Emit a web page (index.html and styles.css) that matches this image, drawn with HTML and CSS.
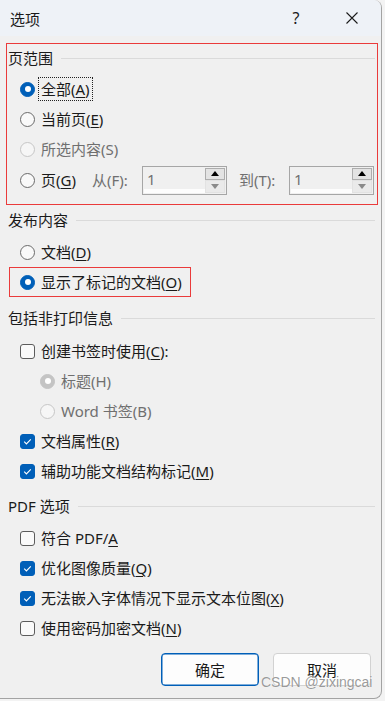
FILE: index.html
```html
<!DOCTYPE html>
<html lang="zh-CN">
<head>
  <meta charset="UTF-8">
  <meta name="viewport" content="width=device-width, initial-scale=1.0">
  <title>选项</title>
  <link rel="stylesheet" href="styles.css">
</head>
<body>

  <div class="dialog">
    <!-- Title bar -->
    <div class="titlebar">
      <span class="title">选项</span>
      <span class="help">?</span>
      <span class="close">
        <svg width="12" height="12" viewBox="0 0 12 12"><path d="M0.5 0.5 L11.5 11.5 M11.5 0.5 L0.5 11.5" stroke="#1b1b1b" stroke-width="1.1" fill="none"/></svg>
      </span>
    </div>

    <div class="content">
      <!-- Page range -->
      <section class="group group-range marked-box">
        <div class="legend"><span>页范围</span><i class="rule"></i></div>
        <div class="options">
          <div class="opt"><span class="radio on"></span><span class="focus">全部(<u>A</u>)</span></div>
          <div class="opt"><span class="radio"></span><span>当前页(<u>E</u>)</span></div>
          <div class="opt disabled"><span class="radio"></span><span>所选内容(S)</span></div>
          <div class="opt opt-pages">
            <span class="opt-main"><span class="radio"></span><span>页(<u>G</u>)</span></span>
            <span class="spin-label">从(F):</span>
            <span class="spin">
              <span class="spin-val">1</span>
              <span class="spin-btns"><span class="spin-up"><i class="tri-up"></i></span><span class="spin-down"><i class="tri-down"></i></span></span>
            </span>
            <span class="spin-label to">到(T):</span>
            <span class="spin">
              <span class="spin-val">1</span>
              <span class="spin-btns"><span class="spin-up"><i class="tri-up"></i></span><span class="spin-down"><i class="tri-down"></i></span></span>
            </span>
          </div>
        </div>
      </section>

      <!-- Publish what -->
      <section class="group group-publish">
        <div class="legend"><span>发布内容</span><i class="rule"></i></div>
        <div class="options">
          <div class="opt"><span class="radio"></span><span>文档(<u>D</u>)</span></div>
          <div class="opt opt-marked"><span class="radio on"></span><span>显示了标记的文档(<u>O</u>)</span></div>
        </div>
      </section>

      <!-- Non-printing info -->
      <section class="group group-info">
        <div class="legend"><span>包括非打印信息</span><i class="rule"></i></div>
        <div class="options">
          <div class="opt"><span class="check"></span><span>创建书签时使用(<u>C</u>):</span></div>
          <div class="opt sub disabled"><span class="radio on"></span><span>标题(H)</span></div>
          <div class="opt sub disabled"><span class="radio"></span><span>Word 书签(B)</span></div>
          <div class="opt"><span class="check on"><svg width="15" height="15" viewBox="0 0 15 15"><path d="M4.2 7.7 L6.4 9.9 L10.8 5.3" stroke="#fff" stroke-width="1.1" fill="none"/></svg></span><span>文档属性(<u>R</u>)</span></div>
          <div class="opt"><span class="check on"><svg width="15" height="15" viewBox="0 0 15 15"><path d="M4.2 7.7 L6.4 9.9 L10.8 5.3" stroke="#fff" stroke-width="1.1" fill="none"/></svg></span><span>辅助功能文档结构标记(<u>M</u>)</span></div>
        </div>
      </section>

      <!-- PDF options -->
      <section class="group group-pdf">
        <div class="legend"><span>PDF 选项</span><i class="rule"></i></div>
        <div class="options">
          <div class="opt"><span class="check"></span><span>符合 PDF/<u>A</u></span></div>
          <div class="opt"><span class="check on"><svg width="15" height="15" viewBox="0 0 15 15"><path d="M4.2 7.7 L6.4 9.9 L10.8 5.3" stroke="#fff" stroke-width="1.1" fill="none"/></svg></span><span>优化图像质量(<u>Q</u>)</span></div>
          <div class="opt"><span class="check on"><svg width="15" height="15" viewBox="0 0 15 15"><path d="M4.2 7.7 L6.4 9.9 L10.8 5.3" stroke="#fff" stroke-width="1.1" fill="none"/></svg></span><span>无法嵌入字体情况下显示文本位图(<u>X</u>)</span></div>
          <div class="opt"><span class="check"></span><span>使用密码加密文档(<u>N</u>)</span></div>
        </div>
      </section>

      <div class="buttons">
        <button class="btn btn-default">确定</button>
        <button class="btn">取消</button>
      </div>
    </div>

    <span class="watermark">CSDN @zixingcai</span>
  </div>

</body>
</html>
```

FILE: styles.css
```css
body {
  margin: 0;
  padding: 0;
  background: #f3f3f3;
  font-family: "Noto Sans", "Noto Sans CJK SC", sans-serif;
  color: #1a1a1a;
  overflow: hidden;
}

.dialog {
  position: relative;
  width: 382px;
  height: 699px;
  box-sizing: border-box;
  background: #f0f0f0;
  border-right: 1px solid #a3a3a3;
  border-bottom: 1px solid #a3a3a3;
  border-radius: 0 8px 8px 0;
  overflow: hidden;
}

.titlebar {
  display: flex;
  align-items: center;
  height: 36px;
  background: #eef2f7;
  font-size: 15px;
}

.title {
  margin-left: 10px;
  flex: 1;
}

.help {
  width: 16px;
  margin-right: 42px;
  font-size: 16px;
  text-align: center;
}

.close {
  display: flex;
  margin-right: 23px;
}

.content {
  padding: 7px 0 0 6px;
  font-size: 15px;
}

.group {
  width: 372px;
  box-sizing: border-box;
  border: 1px solid transparent;
  padding-top: 3px;
}

.marked-box {
  border-color: #ea3b3b;
}

.group-range { padding-bottom: 8px; }
.group-publish { padding-bottom: 5px; }
.group-info { padding-bottom: 4px; }
.group-pdf { padding-bottom: 0; }

.legend {
  display: flex;
  align-items: center;
  height: 22px;
  padding-left: 1px;
  line-height: 22px;
}

.rule {
  flex: 1;
  height: 1px;
  margin: 0 2px 0 8px;
  background: #dadada;
}

.options {
  margin-top: 6px;
}

.group-range .options { margin-top: 5px; }
.group-info .options { margin-top: 7px; }

.opt {
  display: flex;
  align-items: center;
  height: 30px;
  padding-left: 13px;
  line-height: 20px;
  white-space: nowrap;
}

.opt.sub {
  padding-left: 33px;
}

.opt.disabled {
  color: #6f6f6f;
}

.opt-marked {
  width: fit-content;
  box-sizing: border-box;
  margin-left: 2px;
  padding: 0 8px 0 10px;
  border: 1px solid #ea3b3b;
}

.radio {
  position: relative;
  width: 15px;
  height: 15px;
  box-sizing: border-box;
  margin-right: 6px;
  border: 1px solid #6a6a6a;
  border-radius: 50%;
  background: #f9f9f9;
  flex: none;
}

.radio.on {
  border-color: #005fb8;
  background: #005fb8;
}

.radio.on::after {
  content: "";
  position: absolute;
  left: 3.5px;
  top: 3.5px;
  width: 6px;
  height: 6px;
  border-radius: 50%;
  background: #fff;
}

.disabled .radio {
  border-color: #c6c6c6;
  background: #f6f6f6;
}

.disabled .radio.on {
  border-color: #c4c4c4;
  background: #c4c4c4;
}

.check {
  display: flex;
  width: 15px;
  height: 15px;
  box-sizing: border-box;
  margin-right: 6px;
  border: 1px solid #5c5c5c;
  border-radius: 3px;
  background: #fafafa;
  flex: none;
}

.check.on {
  border-color: #005fb8;
  background: #005fb8;
}

.check svg {
  margin: -1px;
}

.focus {
  outline: 1px dotted #222;
  outline-offset: 1px;
  padding: 0 1px;
  margin-left: -1px;
}

u {
  text-decoration-thickness: 1px;
  text-underline-offset: 2px;
}

/* pages row with spin boxes */
.opt-pages {
  height: 32px;
}

.opt-main {
  display: flex;
  align-items: center;
  width: 72px;
}

.spin-label {
  width: 50px;
  color: #6f6f6f;
}

.spin-label.to {
  margin-left: 12px;
}

.spin {
  display: flex;
  width: 85px;
  height: 29px;
  box-sizing: border-box;
  padding: 1px;
  border: 1px solid #a6a6a6;
  background: #f0f0f0;
}

.spin-val {
  flex: 1;
  padding-left: 3px;
  border-bottom: 4px solid #fdfdfd;
  color: #707070;
  font-size: 15px;
  line-height: 22px;
}

.spin-btns {
  display: flex;
  flex-direction: column;
  width: 20px;
}

.spin-up,
.spin-down {
  display: flex;
  align-items: center;
  justify-content: center;
  flex: 1;
  box-sizing: border-box;
}

.spin-up {
  border: 1px solid #adadad;
  background: #e3e3e3;
}

.spin-down {
  border: 1px solid #e2e2e2;
  background: #eaeaea;
}

.tri-up {
  border-left: 4px solid transparent;
  border-right: 4px solid transparent;
  border-bottom: 5px solid #000;
}

.tri-down {
  border-left: 4px solid transparent;
  border-right: 4px solid transparent;
  border-top: 5px solid #8a8a8a;
}

/* dialog buttons */
.buttons {
  display: flex;
  justify-content: flex-end;
  gap: 14px;
  margin-top: 9px;
  padding-right: 10px;
}

.btn {
  width: 98px;
  height: 33px;
  border: 1px solid #d2d2d2;
  border-radius: 4px;
  background: #fdfdfd;
  font-family: "Noto Sans", "Noto Sans CJK SC", sans-serif;
  font-size: 15px;
  color: #1a1a1a;
}

.btn-default {
  border: 1px solid #005fb8;
  box-shadow: inset 0 0 0 0.5px #005fb8;
}

.watermark {
  position: absolute;
  left: 261px;
  top: 674px;
  font-family: "Liberation Sans", Arial, sans-serif;
  font-size: 14px;
  color: rgba(110, 110, 110, 0.7);
  text-shadow: 0 0 1px #fff;
}
```
